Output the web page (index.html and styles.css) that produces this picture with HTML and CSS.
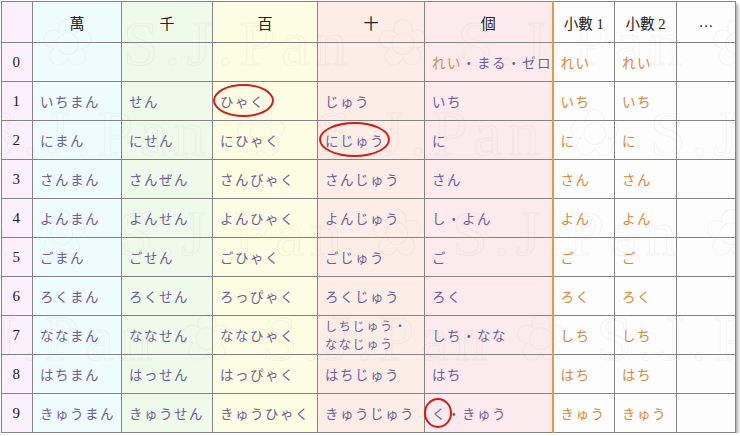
FILE: index.html
```html
<!DOCTYPE html>
<html lang="ja">
<head>
<meta charset="utf-8">
<link rel="stylesheet" href="styles.css">
</head>
<body>
<div class="wrap">
<table class="num">
  <colgroup>
    <col class="c0"><col class="c1"><col class="c2"><col class="c3"><col class="c4"><col class="c5"><col class="c6"><col class="c7"><col class="c8">
  </colgroup>
  <tr class="head">
    <th class="n"></th><th class="man">萬</th><th class="sen">千</th><th class="hyaku">百</th><th class="juu">十</th><th class="ko">個</th><th class="dec">小數 1</th><th class="dec">小數 2</th><th class="dec">…</th>
  </tr>
  <tr><td class="n">0</td><td class="man"></td><td class="sen"></td><td class="hyaku"></td><td class="juu"></td><td class="ko"><span class="or">れい</span>・まる・ゼロ</td><td class="dec or">れい</td><td class="dec or">れい</td><td class="dec"></td></tr>
  <tr><td class="n">1</td><td class="man">いちまん</td><td class="sen">せん</td><td class="hyaku"><span class="circ c-hyaku">ひゃく</span></td><td class="juu">じゅう</td><td class="ko">いち</td><td class="dec or">いち</td><td class="dec or">いち</td><td class="dec"></td></tr>
  <tr><td class="n">2</td><td class="man">にまん</td><td class="sen">にせん</td><td class="hyaku">にひゃく</td><td class="juu"><span class="circ c-juu">にじゅう</span></td><td class="ko">に</td><td class="dec or">に</td><td class="dec or">に</td><td class="dec"></td></tr>
  <tr><td class="n">3</td><td class="man">さんまん</td><td class="sen">さんぜん</td><td class="hyaku">さんびゃく</td><td class="juu">さんじゅう</td><td class="ko">さん</td><td class="dec or">さん</td><td class="dec or">さん</td><td class="dec"></td></tr>
  <tr><td class="n">4</td><td class="man">よんまん</td><td class="sen">よんせん</td><td class="hyaku">よんひゃく</td><td class="juu">よんじゅう</td><td class="ko">し・よん</td><td class="dec or">よん</td><td class="dec or">よん</td><td class="dec"></td></tr>
  <tr><td class="n">5</td><td class="man">ごまん</td><td class="sen">ごせん</td><td class="hyaku">ごひゃく</td><td class="juu">ごじゅう</td><td class="ko">ご</td><td class="dec or">ご</td><td class="dec or">ご</td><td class="dec"></td></tr>
  <tr><td class="n">6</td><td class="man">ろくまん</td><td class="sen">ろくせん</td><td class="hyaku">ろっぴゃく</td><td class="juu">ろくじゅう</td><td class="ko">ろく</td><td class="dec or">ろく</td><td class="dec or">ろく</td><td class="dec"></td></tr>
  <tr><td class="n">7</td><td class="man">ななまん</td><td class="sen">ななせん</td><td class="hyaku">ななひゃく</td><td class="juu small">しちじゅう・<br>ななじゅう</td><td class="ko">しち・なな</td><td class="dec or">しち</td><td class="dec or">しち</td><td class="dec"></td></tr>
  <tr><td class="n">8</td><td class="man">はちまん</td><td class="sen">はっせん</td><td class="hyaku">はっぴゃく</td><td class="juu">はちじゅう</td><td class="ko">はち</td><td class="dec or">はち</td><td class="dec or">はち</td><td class="dec"></td></tr>
  <tr><td class="n">9</td><td class="man">きゅうまん</td><td class="sen">きゅうせん</td><td class="hyaku">きゅうひゃく</td><td class="juu">きゅうじゅう</td><td class="ko"><span class="circ c-ku">く</span>・きゅう</td><td class="dec or">きゅう</td><td class="dec or">きゅう</td><td class="dec"></td></tr>
</table>
<div class="wm" aria-hidden="true">
  <div class="wm-line l1">✿ S.J.Pan ✿ S.J.Pan ✿ S.J.Pan</div>
  <div class="wm-line l2">S.J.Pan ✿ S.J.Pan ✿ S.J.Pan ✿</div>
  <div class="wm-line l3">an ✿ S.J.Pan ✿ S.J.Pan ✿ S.J.</div>
  <div class="wm-line l4">J.Pan ✿ S.J.Pan ✿ S.J.Pan ✿</div>
</div>
</div>
</body>
</html>
```

FILE: styles.css
```css
html, body {
  margin: 0;
  padding: 0;
  background: #ffffff;
}
.wrap {
  position: relative;
  width: 734px;
  margin: 1px 0 0 1px;
}
.num {
  border-collapse: collapse;
  table-layout: fixed;
  width: 734px;
  box-shadow: 2px 3px 3px rgba(0,0,0,0.35);
  font-family: "Noto Sans CJK JP", "Liberation Serif", sans-serif;
  font-size: 13.5px;
  color: #6f5d9c;
}
.c0 { width: 31px; }
.c1 { width: 89px; }
.c2 { width: 91px; }
.c3 { width: 105px; }
.c4 { width: 107px; }
.c5 { width: 128px; }
.c6 { width: 62px; }
.c7 { width: 62px; }
.c8 { width: 59px; }
.num th, .num td {
  border: 1px solid #858585;
  padding: 0 0 0 7px;
  vertical-align: middle;
  text-align: left;
  letter-spacing: 1.5px;
  white-space: nowrap;
  font-weight: normal;
}
.num tr { height: 39px; }
.num tr.head { height: 41px; }
.num th {
  font-family: "Liberation Serif", "Noto Sans CJK JP", serif;
  color: #222;
  font-size: 15px;
  text-align: center;
  padding: 0;
  letter-spacing: 0;
}
.num th.dec { letter-spacing: 0; font-size: 14.5px; }
.num .n {
  font-family: "Liberation Serif", serif;
  color: #222;
  font-size: 15px;
  text-align: center;
  padding: 0;
  background: #fbf0fb;
}
.man { background: #effcfd; }
.sen { background: #eefaea; }
.hyaku { background: #fdfde3; }
.juu { background: #fcede6; }
.ko { background: #fbebed; border-right: 2px solid #e29a4a !important; }
.dec { background: #fdfdfd; }
.or { color: #d9893b; }
.num td.small {
  font-size: 12px;
  line-height: 18px;
  letter-spacing: 1.8px;
}
.circ {
  position: relative;
  display: inline-block;
}
.circ::after {
  content: "";
  position: absolute;
  border: 2px solid #d21b1b;
  border-radius: 50%;
}
.c-hyaku::after { left: -7px; right: -9px; top: -7px; bottom: -6px; }
.c-juu::after { left: -6px; right: -5px; top: -8px; bottom: -7px; }
.c-ku::after { left: -8px; right: -5px; top: -5px; bottom: -5px; }
.wm {
  position: absolute;
  left: 0;
  top: 0;
  width: 734px;
  height: 431px;
  overflow: hidden;
  pointer-events: none;
}
.wm-line {
  position: absolute;
  font-family: "Liberation Serif", serif;
  font-size: 64px;
  white-space: nowrap;
  color: transparent;
  -webkit-text-stroke: 1px rgba(150,150,150,0.09);
  letter-spacing: 6px;
}
.l1 { left: 40px; top: 5px; }
.l2 { left: -20px; top: 95px; }
.l3 { left: -60px; top: 195px; }
.l4 { left: -10px; top: 300px; }
```
